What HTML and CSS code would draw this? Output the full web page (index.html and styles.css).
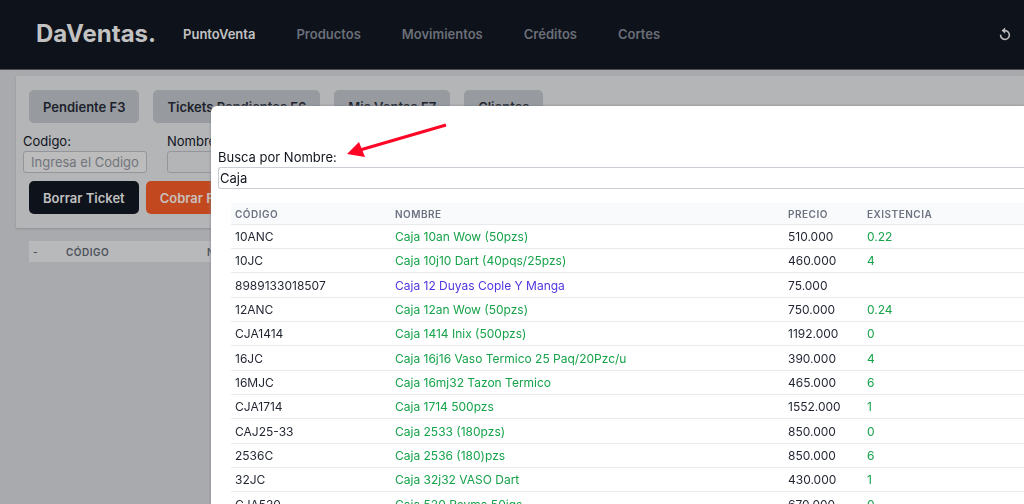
FILE: index.html
```html
<!DOCTYPE html>
<html lang="es">
<head>
<meta charset="utf-8">
<meta name="viewport" content="width=device-width, initial-scale=1">
<title>DaVentas</title>
<link rel="stylesheet" href="styles.css">
</head>
<body>
<header class="topbar">
  <a class="brand" href="#">DaVentas.</a>
  <nav class="menu">
    <a class="menu-link active" href="#">PuntoVenta</a>
    <a class="menu-link" href="#">Productos</a>
    <a class="menu-link" href="#">Movimientos</a>
    <a class="menu-link" href="#">Créditos</a>
    <a class="menu-link" href="#">Cortes</a>
  </nav>
  <button class="reload" type="button" aria-label="Recargar">
    <svg width="12" height="14" viewBox="0 0 12 14" fill="none"><path d="M1.6 7.6A4.4 4.4 0 1 0 6 3.6" stroke="currentColor" stroke-width="1.6"/><path d="M6.2 0.4v6.4L2.6 3.6z" fill="currentColor"/></svg>
  </button>
</header>
<main class="page">
  <section class="panel">
    <div class="actions wide">
      <button class="btn" type="button">Pendiente F3</button>
      <button class="btn" type="button">Tickets Pendientes F6</button>
      <button class="btn" type="button">Mis Ventas F7</button>
      <button class="btn" type="button">Clientes</button>
    </div>
    <div class="fields">
      <div class="field">
        <label for="codigo">Codigo:</label>
        <input class="input centered" id="codigo" type="text" placeholder="Ingresa el Codigo">
      </div>
      <div class="field">
        <label for="nombre">Nombre:</label>
        <input class="input" id="nombre" type="text">
      </div>
    </div>
    <div class="actions">
      <button class="btn dark" type="button">Borrar Ticket</button>
      <button class="btn orange" type="button">Cobrar F2</button>
    </div>
  </section>
  <table class="ticket">
    <thead><tr><th class="t-mark">-</th><th class="t-code">Código</th><th>Nombre</th></tr></thead>
  </table>
</main>
<div class="modal" role="dialog" aria-label="Buscar producto">
  <label class="search-label" for="busca">Busca por Nombre:</label>
  <input class="input search" id="busca" type="text" value="Caja">
  <table class="results">
    <thead><tr><th class="c-code">Código</th><th class="c-name">Nombre</th><th class="c-price">Precio</th><th>Existencia</th></tr></thead>
    <tbody>
      <tr><td>10ANC</td><td class="ok">Caja 10an Wow (50pzs)</td><td>510.000</td><td class="ok">0.22</td></tr>
      <tr><td>10JC</td><td class="ok">Caja 10j10 Dart (40pqs/25pzs)</td><td>460.000</td><td class="ok">4</td></tr>
      <tr><td>8989133018507</td><td class="service">Caja 12 Duyas Cople Y Manga</td><td>75.000</td><td></td></tr>
      <tr><td>12ANC</td><td class="ok">Caja 12an Wow (50pzs)</td><td>750.000</td><td class="ok">0.24</td></tr>
      <tr><td>CJA1414</td><td class="ok">Caja 1414 Inix (500pzs)</td><td>1192.000</td><td class="ok">0</td></tr>
      <tr><td>16JC</td><td class="ok">Caja 16j16 Vaso Termico 25 Paq/20Pzc/u</td><td>390.000</td><td class="ok">4</td></tr>
      <tr><td>16MJC</td><td class="ok">Caja 16mj32 Tazon Termico</td><td>465.000</td><td class="ok">6</td></tr>
      <tr><td>CJA1714</td><td class="ok">Caja 1714 500pzs</td><td>1552.000</td><td class="ok">1</td></tr>
      <tr><td>CAJ25-33</td><td class="ok">Caja 2533 (180pzs)</td><td>850.000</td><td class="ok">0</td></tr>
      <tr><td>2536C</td><td class="ok">Caja 2536 (180)pzs</td><td>850.000</td><td class="ok">6</td></tr>
      <tr><td>32JC</td><td class="ok">Caja 32j32 VASO Dart</td><td>430.000</td><td class="ok">1</td></tr>
      <tr><td>CJA530</td><td class="ok">Caja 530 Reyma 50jgs</td><td>670.000</td><td class="ok">0</td></tr>
    </tbody>
  </table>
</div>
<svg class="arrow" width="102" height="38" viewBox="0 0 102 38" aria-hidden="true"><path d="M100 3 14 28" stroke="#ff0526" stroke-width="3"/><path d="M1 32 13 20 19 35z" fill="#ff0526"/></svg>
</body>
</html>
```

FILE: styles.css
```css
* { box-sizing: border-box; }

body {
  margin: 0;
  min-height: 100vh;
  overflow: hidden;
  background: #a9aaad;
  color: #10131c;
  font-family: Inter, "Liberation Sans", sans-serif;
  font-size: 13px;
  line-height: 20px;
}

button, input { font: inherit; }
a { text-decoration: none; }

.topbar {
  display: flex;
  align-items: center;
  height: 70px;
  padding: 0 13px 2px 36px;
  background: #0e121b;
  border-bottom: 1px solid #4b4e55;
}

.brand {
  color: #c2c2c2;
  font-size: 24px;
  font-weight: 700;
  line-height: 32px;
}

.menu {
  display: flex;
  flex: 1;
  gap: 41px;
  margin-left: 27px;
}

.menu-link {
  color: #6b6f78;
  font-weight: 600;
}

.menu-link.active { color: #c2c2c2; }

.reload {
  display: flex;
  padding: 0;
  border: 0;
  background: none;
  color: #bcbcbc;
}

.page { padding: 6px 0 0 16px; }

.panel {
  padding: 14px 0 14px 13px;
  background: #b4b5b7;
  box-shadow: 0 1px 2px #8f9195;
}

.actions { display: flex; gap: 7px; }
.actions.wide { gap: 14px; }

.btn {
  height: 33px;
  padding: 0 14px;
  border: 0;
  border-radius: 5px;
  background: #979b9f;
  color: #1d222c;
  font-weight: 600;
  white-space: nowrap;
}

.btn.dark { background: #0e121b; color: #c0c0c0; }
.btn.orange { background: #c24820; color: #c8c0bd; }

.fields {
  display: flex;
  gap: 20px;
  margin: 8px 0 8px -6px;
}

.field { display: flex; flex-direction: column; width: 124px; }

.input {
  width: 100%;
  height: 22px;
  padding: 0 1px;
  border: 1px solid #94969b;
  border-radius: 3px;
  background: transparent;
  color: #10131c;
  outline: 0;
}

.input.centered { background: #bcbcbc; text-align: center; }
.input::placeholder { color: #71757d; opacity: 1; }

table { border-collapse: collapse; table-layout: fixed; width: 100%; }

th {
  padding: 1px 4px 0;
  color: #6b7280;
  font-size: 10px;
  font-weight: 600;
  letter-spacing: 0.05em;
  text-align: left;
  text-transform: uppercase;
}

.ticket { width: calc(100% - 13px); margin: 13px 0 0 13px; }
.ticket th { height: 21px; background: #b8b9ba; color: #4d525c; }
.ticket .t-mark { width: 33px; }
.ticket .t-code { width: 141px; }

.modal {
  position: fixed;
  inset: 106px 0 0 211px;
  overflow: hidden;
  padding: 41px 0 0 7px;
  border-top-left-radius: 6px;
  background: #fff;
  box-shadow: 0 0 3px #80828a;
}

.search-label { display: block; }

.search {
  display: block;
  border-color: #c9cdd4;
  border-right: 0;
  border-radius: 3px 0 0 3px;
}

.results { width: calc(100% - 13px); margin: 14px 0 0 13px; }
.results th { height: 21px; background: #f9fafb; }
.results tr { border-bottom: 1px solid #e8eaed; }
.results .c-code { width: 160px; }
.results .c-name { width: 393px; }
.results .c-price { width: 79px; }

.results td {
  height: 24px;
  padding: 1px 4px 0;
  color: #1f2430;
  font-size: 12px;
  line-height: 20px;
  white-space: nowrap;
}

.results tr:nth-child(3n) td { height: 25px; }
.results td.ok { color: #16a34a; }
.results td.service { color: #4f36e0; }

.arrow { position: fixed; top: 122px; left: 346px; }
```
